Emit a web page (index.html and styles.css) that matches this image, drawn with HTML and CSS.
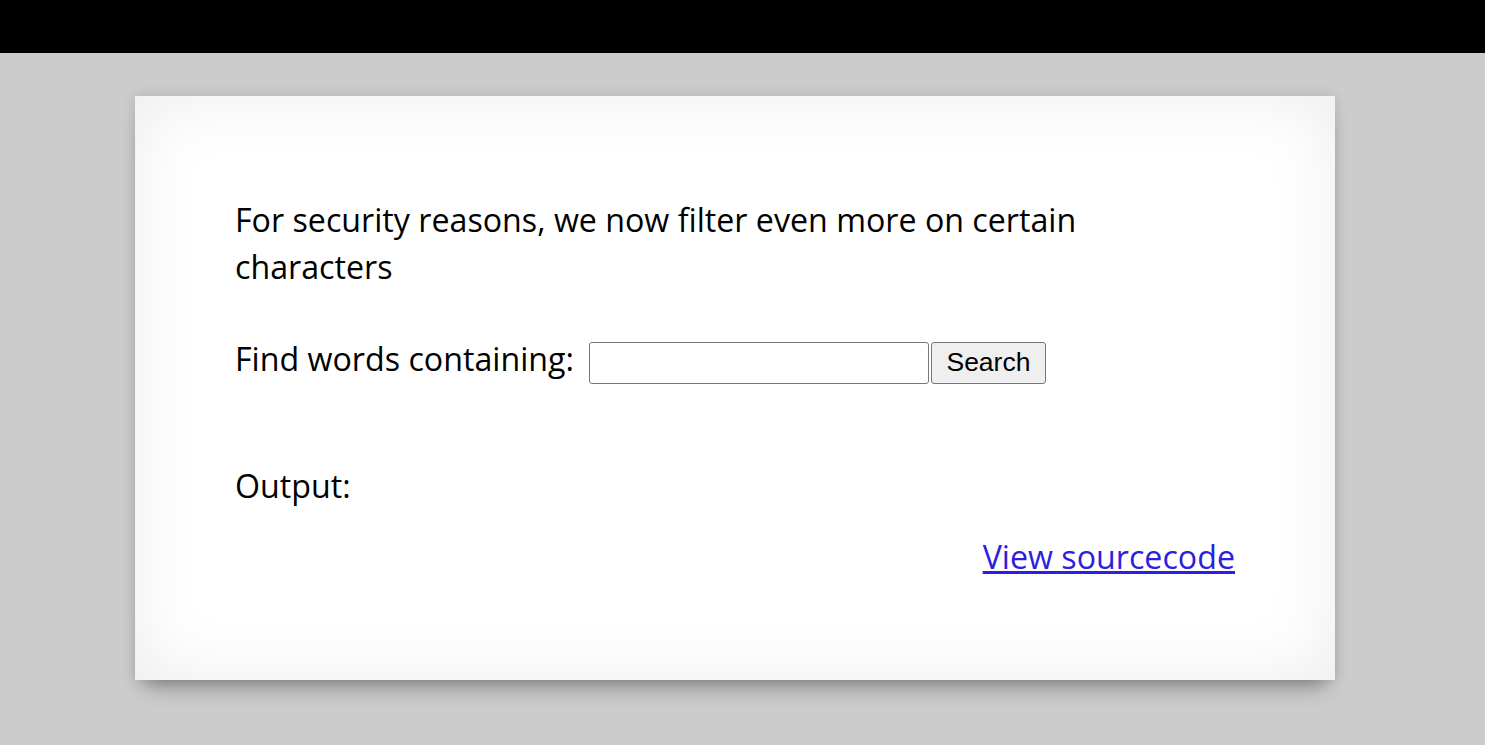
FILE: index.html
```html
<!DOCTYPE html>
<html>
<head>
<meta charset="utf-8">
<link rel="stylesheet" href="styles.css">
</head>
<body>
<div class="topbar"></div>
<div class="content">
  <p class="intro">For security reasons, we now filter even more on certain characters</p>
  <form class="search">
    <span class="label">Find words containing:</span><input class="field" type="text"><button class="btn" type="button">Search</button>
  </form>
  <p class="output">Output:</p>
  <div class="source"><a href="#">View sourcecode</a></div>
</div>
</body>
</html>
```
FILE: styles.css
```css
html, body {
  margin: 0;
  padding: 0;
  background: #cccccc;
}
body {
  font-family: "Open Sans", "Noto Sans", sans-serif;
  color: #000;
  height: 745px;
  overflow: hidden;
}
.topbar {
  height: 53px;
  background: #000;
}
.content {
  margin: 43px 0 0 135px;
  width: 1000px;
  height: 384px;
  padding: 100px;
  background: #fff;
  font-size: 32.2px;
  line-height: 47px;
  box-shadow: 0 0 12px rgba(0,0,0,0.13), 0 16px 20px -10px rgba(0,0,0,0.35), inset 0 0 70px rgba(0,0,0,0.08);
}
.intro {
  margin: 0;
  width: 930px;
}
.search {
  margin: 45px 0 0 0;
  display: flex;
  align-items: baseline;
}
.label {
  margin-right: 15px;
}
.field {
  width: 340px;
  height: 42px;
  box-sizing: border-box;
  border: 1px solid #767676;
  border-radius: 3px;
  padding: 0 4px;
  font-size: 24px;
  font-family: "Liberation Sans", Arial, sans-serif;
  background: #fff;
  margin: 0;
}
.btn {
  margin: 0 0 0 2px;
  width: 115px;
  height: 42px;
  box-sizing: border-box;
  border: 1px solid #767676;
  border-radius: 3px;
  background: #efefef;
  font-family: "Liberation Sans", Arial, sans-serif;
  font-size: 26.5px;
  color: #000;
  padding: 0;
}
.output {
  margin: 78px 0 0 0;
}
.source {
  margin-top: 24px;
  text-align: right;
}
.source a {
  color: #2d1ee0;
}
```
